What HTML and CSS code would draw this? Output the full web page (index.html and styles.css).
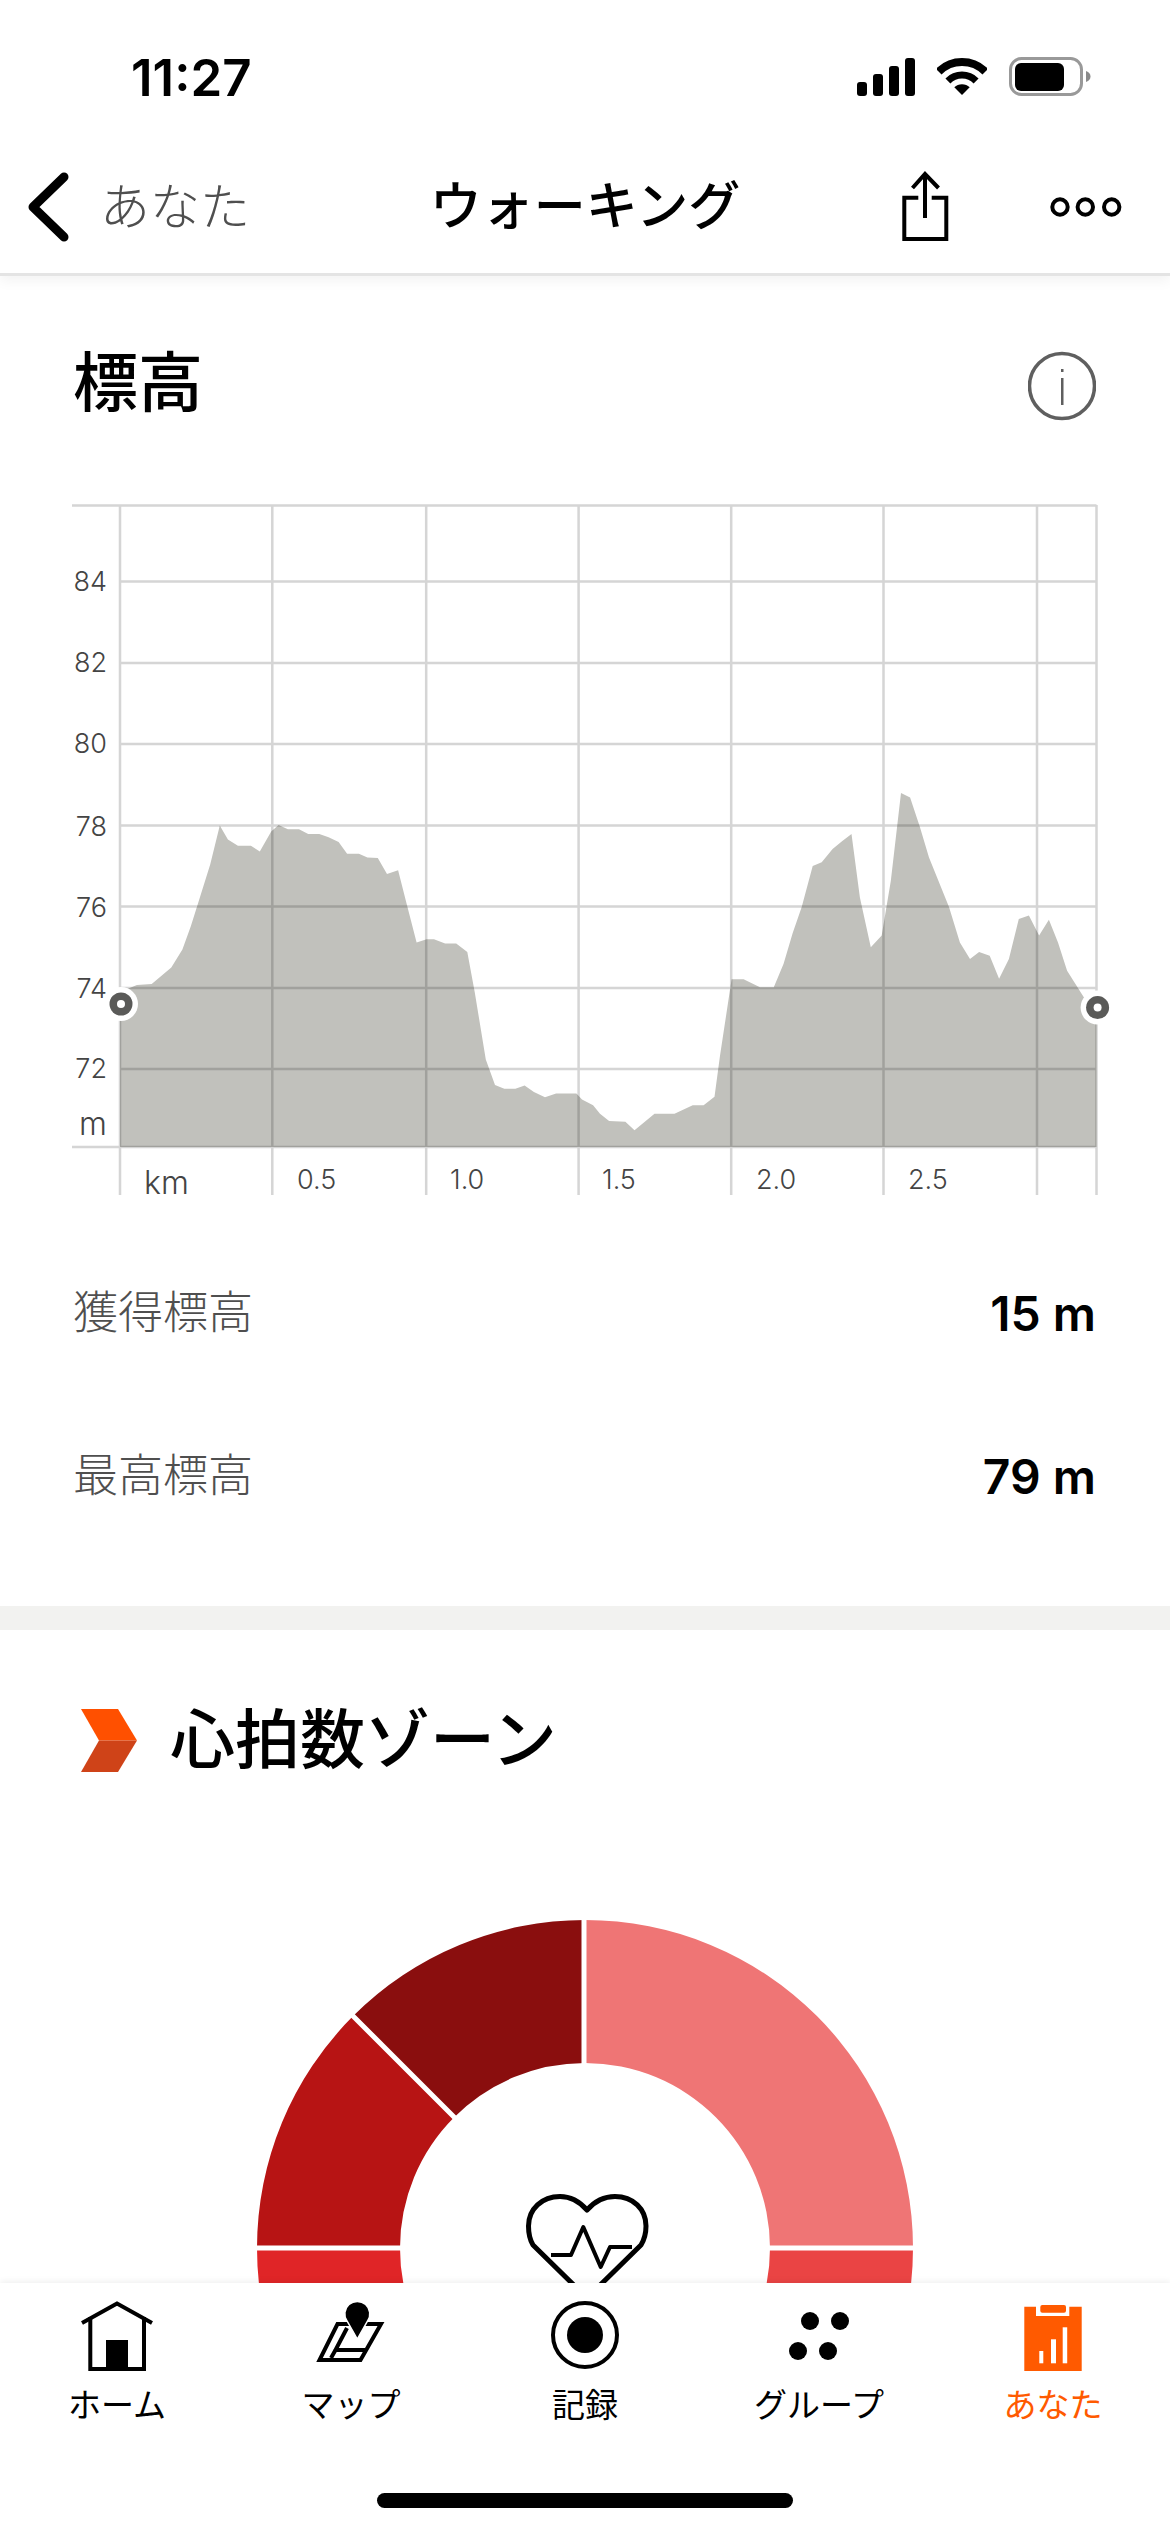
FILE: index.html
```html
<!DOCTYPE html>
<html lang="ja">
<head>
    <meta charset="utf-8">
    <title>ウォーキング</title>
    <link rel="stylesheet" href="styles.css">
</head>
<body>
<div class="screen">

    <header class="top">
        <div class="status">
            <span class="time">11:27</span>
            <div class="status-icons">
                <svg class="signal" width="58" height="38" viewBox="0 0 58 38">
                    <rect x="0" y="24" width="10" height="14" rx="3"/>
                    <rect x="16" y="16" width="10" height="22" rx="3"/>
                    <rect x="32" y="8" width="10" height="30" rx="3"/>
                    <rect x="48" y="0" width="10" height="38" rx="3"/>
                </svg>
                <svg class="wifi" width="50" height="38" viewBox="0 0 50 38">
                    <path class="wifi-arc" stroke-width="8" d="M1.7 13.7A33 33 0 0 1 48.3 13.7"/>
                    <path class="wifi-arc" stroke-width="7" d="M10.9 22.9A20 20 0 0 1 39.1 22.9"/>
                    <path d="M25 37L17.3 29.3A11 11 0 0 1 32.7 29.3Z"/>
                </svg>
                <svg class="battery" width="82" height="40" viewBox="0 0 82 40">
                    <rect class="battery-case" x="1.5" y="1.5" width="71" height="36" rx="11"/>
                    <rect x="6" y="6" width="49" height="28" rx="6"/>
                    <path class="battery-tip" d="M77 14C80 15 81.500 17 81.500 19.500C81.500 22 80 24 77 25Z"/>
                </svg>
            </div>
        </div>
        <nav class="nav">
            <div class="nav-left">
                <svg class="back" width="41" height="70" viewBox="0 0 41 70">
                    <path d="M36 5L5 35L36 65"/>
                </svg>
                <span class="back-text">あなた</span>
            </div>
            <div class="nav-title">ウォーキング</div>
            <div class="nav-right">
                <svg class="line-icon" width="50" height="74" viewBox="0 0 50 74">
                    <path d="M18.300 27.700H4.300V69H46.300V27.700H31.700"/>
                    <path d="M25 4V48M12.500 18L25 4L38.500 18"/>
                </svg>
                <svg class="line-icon" width="72" height="22" viewBox="0 0 72 22">
                    <circle cx="10" cy="11" r="7.700"/>
                    <circle cx="35.300" cy="11" r="7.700"/>
                    <circle cx="61.700" cy="11" r="7.700"/>
                </svg>
            </div>
        </nav>
    </header>

    <main class="content">
        <section class="elevation">
            <div class="card-head">
                <h1 class="card-title">標高</h1>
                <svg class="info" width="68" height="70" viewBox="0 0 68 70">
                    <circle class="info-ring" cx="34" cy="35" r="32.500"/>
                    <rect class="info-mark" x="33" y="18" width="2.500" height="3"/>
                    <rect class="info-mark" x="33" y="27" width="2.500" height="27"/>
                </svg>
            </div>

            <svg class="chart" width="1060" height="710" viewBox="60 495 1060 710">
                <polygon class="area" points="120,992 136.900,985 151.700,984 171.300,967.500 182.400,949.600 190.900,926 198.300,902.400 210.200,864.600 219.800,825.500 227.900,839.600 237.900,845.700 250.900,845.700 259.800,851.400 271.200,831.600 278.600,825 287.900,829.200 299,829.200 308.200,833.900 319.300,833.900 328.600,837.200 338.600,842 347.100,853.800 358.900,853.800 367.400,857.500 377.800,858 387,874 398.100,870.300 406.300,902.400 416.600,942.500 426.600,939.200 434,939.200 445.100,943.400 456.200,943.400 467.300,951.900 474.700,992 485.800,1059.500 495,1085 504.300,1088.800 515.400,1088.800 524.600,1085.500 533.900,1092 545,1097.300 556.100,1093.500 576.400,1093.500 582,1099.600 593.100,1105.300 600,1113.800 609.100,1120.900 625.400,1121.800 634.500,1130.300 654.500,1113.800 674.500,1113.800 692.700,1105.300 703.600,1105.300 714.500,1096.800 720,1055.700 731.600,979.300 743.600,979.300 760,987.300 773.800,987.300 783.600,963.700 792.700,933 801.700,907 812.700,866 821.700,862.300 832.600,849 841.700,841.500 851.500,833.900 859.900,897.600 870.800,947.200 881.700,935.400 890.800,881.100 901,792.900 910.100,797.600 919.900,826.900 929,857.500 949,907 959.900,942.500 970,959 979.100,951.900 989.700,955.700 999.100,978.800 1008.900,959 1018.800,918.900 1028.900,915.600 1039.100,935.400 1048.900,919.800 1058,942.500 1067.100,970.800 1083.500,996.800 1096.500,1013.300 1096.500,1147 120,1147"/>
                <g class="grid">
                    <path class="grid-h" d="M72 505.500H1096.500M120 581.500H1096.500M120 663H1096.500M120 744H1096.500M120 825.500H1096.500M120 906.500H1096.500M120 988H1096.500M120 1069H1096.500M72 1147H1096.500"/>
                    <path class="grid-v" d="M120 505V1195M272.300 505V1195M426.200 505V1195M578.600 505V1195M731.200 505V1195M883.500 505V1195M1037 505V1195M1096.500 505V1195"/>
                </g>
                <g>
                    <circle class="marker-halo" cx="121" cy="1004" r="17"/>
                    <circle class="marker-dot" cx="121" cy="1004" r="11.500"/>
                    <circle class="marker-halo" cx="121" cy="1004" r="4"/>
                    <circle class="marker-halo" cx="1097.600" cy="1007.600" r="17"/>
                    <circle class="marker-dot" cx="1097.600" cy="1007.600" r="11.500"/>
                    <circle class="marker-halo" cx="1097.600" cy="1007.600" r="4"/>
                </g>
                <g class="axis-y">
                    <text x="107" y="591">84</text>
                    <text x="107" y="672">82</text>
                    <text x="107" y="753">80</text>
                    <text x="107" y="836">78</text>
                    <text x="107" y="917">76</text>
                    <text x="107" y="998">74</text>
                    <text x="107" y="1078">72</text>
                    <text class="axis-unit" x="107" y="1135">m</text>
                </g>
                <g class="axis-x">
                    <text class="axis-unit" x="144" y="1194">km</text>
                    <text x="297" y="1189">0.5</text>
                    <text x="450" y="1189">1.0</text>
                    <text x="602" y="1189">1.5</text>
                    <text x="756" y="1189">2.0</text>
                    <text x="908" y="1189">2.5</text>
                </g>
            </svg>

            <div class="stats">
                <div class="stat-row">
                    <span class="stat-label">獲得標高</span>
                    <span class="stat-value">15 m</span>
                </div>
                <div class="stat-row">
                    <span class="stat-label">最高標高</span>
                    <span class="stat-value">79 m</span>
                </div>
            </div>
        </section>

        <div class="band"></div>

        <section class="zones">
            <div class="zones-head">
                <svg width="57" height="63" viewBox="0 0 57 63">
                    <polygon class="chev-top" points="0,0 37,0 56,31.500 18,31.500"/>
                    <polygon class="chev-bottom" points="18,31.500 56,31.500 37,63 0,63"/>
                </svg>
                <h2 class="card-title">心拍数ゾーン</h2>
            </div>
            <svg class="donut" width="656" height="400" viewBox="257 1920 656 400">
                <path class="z1" d="M585 1920A328 328 0 0 1 913 2248H770A185 185 0 0 0 585 2063Z"/>
                <path class="z2" d="M585 1920A328 328 0 0 0 353.100 2016.100L454.200 2117.200A185 185 0 0 1 585 2063Z"/>
                <path class="z3" d="M353.100 2016.100A328 328 0 0 0 257 2248H400A185 185 0 0 1 454.200 2117.200Z"/>
                <path class="z4" d="M257 2248A328 328 0 0 0 353.100 2479.900L454.200 2378.800A185 185 0 0 1 400 2248Z"/>
                <path class="z5" d="M913 2248A328 328 0 0 1 816.900 2479.900L715.800 2378.800A185 185 0 0 0 770 2248Z"/>
                <path class="donut-gap" d="M584 1915V2070M250 2248H406M764 2248H920M350 2013L458 2121"/>
                <path class="heart" d="M587 2298L533 2245C530 2240 528.500 2233 528.500 2226C528.500 2209 542 2196.500 560 2196.500C571 2196.500 580 2202 587 2210C594 2202 604 2196.500 615 2196.500C633 2196.500 646 2209 646 2226C646 2233 644 2240 641 2245Z"/>
                <path class="pulse" d="M551 2255H571L583.300 2227L600.700 2267L610 2247H632"/>
            </svg>
        </section>
    </main>

    <footer class="tabbar">
        <div class="tabs">
            <div class="tab">
                <svg width="72" height="72" viewBox="0 0 72 72">
                    <path class="line-icon-path" d="M1 23L36 3.500L71 23"/>
                    <path class="line-icon-path" d="M9.300 17V69H63V17"/>
                    <rect x="25" y="40" width="22" height="28"/>
                </svg>
                <span class="tab-label">ホーム</span>
            </div>
            <div class="tab">
                <svg width="70" height="72" viewBox="0 0 70 72">
                    <path class="line-icon-path" d="M21.500 24H65L44.500 60H3.500Z"/>
                    <path class="line-icon-path" d="M31 28L19.500 50H50M19.500 50L15 58"/>
                    <path class="pin" d="M41.300 39L31 21A12.500 12.500 0 1 1 51.600 21Z"/>
                </svg>
                <span class="tab-label">マップ</span>
            </div>
            <div class="tab">
                <svg width="72" height="72" viewBox="0 0 72 72">
                    <circle class="line-icon-path" cx="36" cy="35" r="32"/>
                    <circle cx="36" cy="35" r="18"/>
                </svg>
                <span class="tab-label">記録</span>
            </div>
            <div class="tab">
                <svg width="72" height="72" viewBox="0 0 72 72">
                    <circle cx="27" cy="21" r="9"/>
                    <circle cx="57" cy="21" r="9"/>
                    <circle cx="15" cy="51" r="9"/>
                    <circle cx="45" cy="51" r="9"/>
                </svg>
                <span class="tab-label">グループ</span>
            </div>
            <div class="tab tab-active">
                <svg width="60" height="72" viewBox="0 0 60 72">
                    <path class="you-board" d="M1.300 6.700H13V16H46.300V6.700H58.700V71H1.300Z"/>
                    <rect class="you-board" x="17.300" y="5" width="25.700" height="7.700" rx="2"/>
                    <rect class="you-bar" x="16.300" y="51" width="4" height="12.300"/>
                    <rect class="you-bar" x="28" y="39.300" width="5" height="24"/>
                    <rect class="you-bar" x="39.700" y="27.300" width="4.500" height="36"/>
                </svg>
                <span class="tab-label">あなた</span>
            </div>
        </div>
        <div class="home-bar"></div>
    </footer>

</div>
</body>
</html>
```

FILE: styles.css
```css
BODY {
    margin: 0;
    background: #fff;
    color: #000;
    font-family: Inter, "Noto Sans CJK JP", sans-serif;
}
H1, H2 {
    margin: 0;
}
SVG {
    display: block;
}

.screen {
    display: flex;
    flex-direction: column;
    width: 1170px;
    height: 2532px;
    overflow: hidden;
}

/* status bar + nav */
.top {
    position: relative;
    z-index: 2;
    flex: none;
    background: #fff;
    border-bottom: 3px solid #e4e4e4;
    box-shadow: 0 5px 12px rgba(0, 0, 0, 0.05);
}
.status {
    display: flex;
    align-items: center;
    justify-content: space-between;
    box-sizing: border-box;
    height: 140px;
    padding: 14px 79px 0 131px;
}
.time {
    font-size: 51px;
    font-weight: 600;
}
.status-icons {
    display: flex;
    align-items: center;
    gap: 22px;
}
.wifi-arc {
    fill: none;
    stroke: #000;
}
.battery-case {
    fill: none;
    stroke: #999;
    stroke-width: 3;
}
.battery-tip {
    fill: #8a8a8a;
}

.nav {
    display: grid;
    grid-template-columns: 1fr auto 1fr;
    align-items: center;
    height: 133px;
}
.nav-left {
    display: flex;
    align-items: center;
    gap: 31px;
    padding-left: 28px;
}
.back path {
    fill: none;
    stroke: #000;
    stroke-width: 9;
    stroke-linecap: round;
    stroke-linejoin: round;
}
.back-text {
    padding-bottom: 8px;
    color: #4f4f4f;
    font-size: 50px;
    font-weight: 300;
}
.nav-title {
    padding-bottom: 8px;
    font-size: 52px;
    font-weight: 500;
}
.nav-right {
    display: flex;
    align-items: center;
    justify-content: flex-end;
    gap: 100px;
    padding-right: 48px;
}
.line-icon {
    fill: none;
    stroke: #000;
    stroke-width: 4;
}

/* scrolling part */
.content {
    flex: 1;
    min-height: 0;
    overflow: hidden;
}
.elevation {
    padding: 67px 74px 48px 73px;
}
.card-head {
    display: flex;
    align-items: center;
    justify-content: space-between;
    height: 80px;
}
.card-title {
    font-size: 65px;
    font-weight: 500;
    line-height: 80px;
}
.info {
    margin-top: 6px;
}
.info-ring {
    fill: none;
    stroke: #5f5f5f;
    stroke-width: 3.500;
}
.info-mark {
    fill: #5f5f5f;
}

.chart {
    margin: 72px 0 0 -13px;
}
.area {
    fill: #c1c1bc;
}
.grid {
    opacity: 0.16;
    fill: none;
    stroke: #000;
}
.grid-h {
    stroke-width: 2.5;
}
.grid-v {
    stroke-width: 2.5;
}
.marker-halo {
    fill: #fff;
}
.marker-dot {
    fill: #5a5a58;
}
.axis-y, .axis-x {
    fill: #444;
    font-size: 27px;
    font-weight: 300;
}
.axis-y {
    text-anchor: end;
}
.axis-unit {
    font-size: 32px;
}

.stats {
    margin-top: 27px;
}
.stat-row {
    display: flex;
    align-items: center;
    justify-content: space-between;
    height: 163px;
}
.stat-label {
    padding-bottom: 9px;
    color: #4f4f4f;
    font-size: 45px;
    font-weight: 300;
}
.stat-value {
    font-size: 48px;
    font-weight: 600;
}

.band {
    height: 24px;
    background: #f2f2f0;
}

.zones {
    padding-top: 70px;
}
.zones-head {
    display: flex;
    align-items: center;
    gap: 32px;
    height: 80px;
    padding-left: 81px;
}
.chev-top {
    fill: #ff5000;
}
.chev-bottom {
    fill: #cf4318;
}
.donut {
    margin: 140px auto 0;
}
.z1 { fill: #ef7575; }
.z2 { fill: #8a0e0e; }
.z3 { fill: #b71414; }
.z4 { fill: #e02527; }
.z5 { fill: #ea4444; }
.donut-gap {
    fill: none;
    stroke: #fff;
    stroke-width: 5;
}
.heart, .pulse {
    fill: none;
    stroke: #000;
    stroke-linejoin: round;
}
.heart {
    stroke-width: 5;
}
.pulse {
    stroke-width: 4;
}

/* bottom tabs */
.tabbar {
    position: relative;
    z-index: 2;
    flex: none;
    height: 249px;
    box-sizing: border-box;
    padding-top: 17px;
    background: #fff;
    box-shadow: 0 -2px 6px rgba(0, 0, 0, 0.06);
}
.tabs {
    display: grid;
    grid-template-columns: repeat(5, 1fr);
}
.tab {
    display: flex;
    flex-direction: column;
    align-items: center;
    gap: 13px;
}
.tab-label {
    font-size: 33px;
    line-height: 40px;
}
.tab-active {
    color: #ff5a00;
}
.line-icon-path {
    fill: none;
    stroke: #000;
    stroke-width: 4;
}
.pin {
    stroke: #fff;
    stroke-width: 1.500;
}
.you-board {
    fill: #ff5a00;
}
.you-bar {
    fill: #fff;
}
.home-bar {
    width: 416px;
    height: 15px;
    margin: 68px auto 0;
    border-radius: 8px;
    background: #000;
}
```
